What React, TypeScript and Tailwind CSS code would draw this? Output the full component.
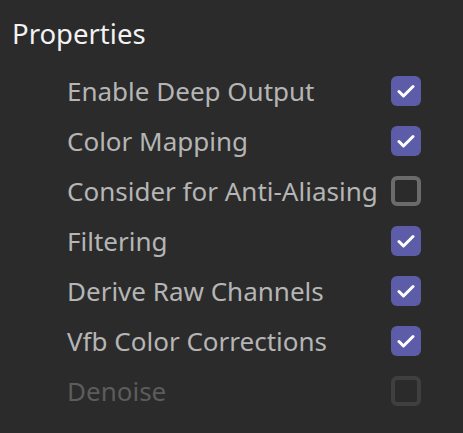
const rows = [
  { label: "Enable Deep Output", checked: true },
  { label: "Color Mapping", checked: true },
  { label: "Consider for Anti-Aliasing", checked: false },
  { label: "Filtering", checked: true },
  { label: "Derive Raw Channels", checked: true },
  { label: "Vfb Color Corrections", checked: true },
  { label: "Denoise", checked: false, disabled: true },
];

function Box({ checked, disabled }: { checked: boolean; disabled?: boolean }) {
  if (checked) {
    return (
      <div className="w-[30px] h-[30px] rounded-[6px] bg-[#5d5ca8] flex items-center justify-center shrink-0">
        <svg width="18" height="14" viewBox="0 0 18 14" fill="none">
          <path d="M2 7.5 L6.5 12 L16 2.5" stroke="#ffffff" strokeWidth="3" strokeLinecap="round" strokeLinejoin="round" />
        </svg>
      </div>
    );
  }
  return (
    <div
      className={`w-[30px] h-[30px] rounded-[6px] border-[4px] shrink-0 ${
        disabled ? "border-[#3f3f3f]" : "border-[#6b6b6b]"
      }`}
    />
  );
}

export default function App() {
  return (
    <div className="w-[463px] h-[433px] bg-[#2b2b2b] font-['Noto_Sans',sans-serif]">
      <div className="h-[66px] pl-[12px] pt-[15px] text-[27.5px] leading-[38px] text-[#f2f2f2]">
        Properties
      </div>
      <div className="flex flex-col">
        {rows.map((row) => (
          <div key={row.label} className="h-[50px] flex items-center justify-between pl-[67px] pr-[42px]">
            <span
              className={`text-[26px] leading-[34px] whitespace-nowrap ${
                row.disabled ? "text-[#5c5c5c]" : "text-[#b5b5b5]"
              }`}
            >
              {row.label}
            </span>
            <Box checked={row.checked} disabled={row.disabled} />
          </div>
        ))}
      </div>
    </div>
  );
}
